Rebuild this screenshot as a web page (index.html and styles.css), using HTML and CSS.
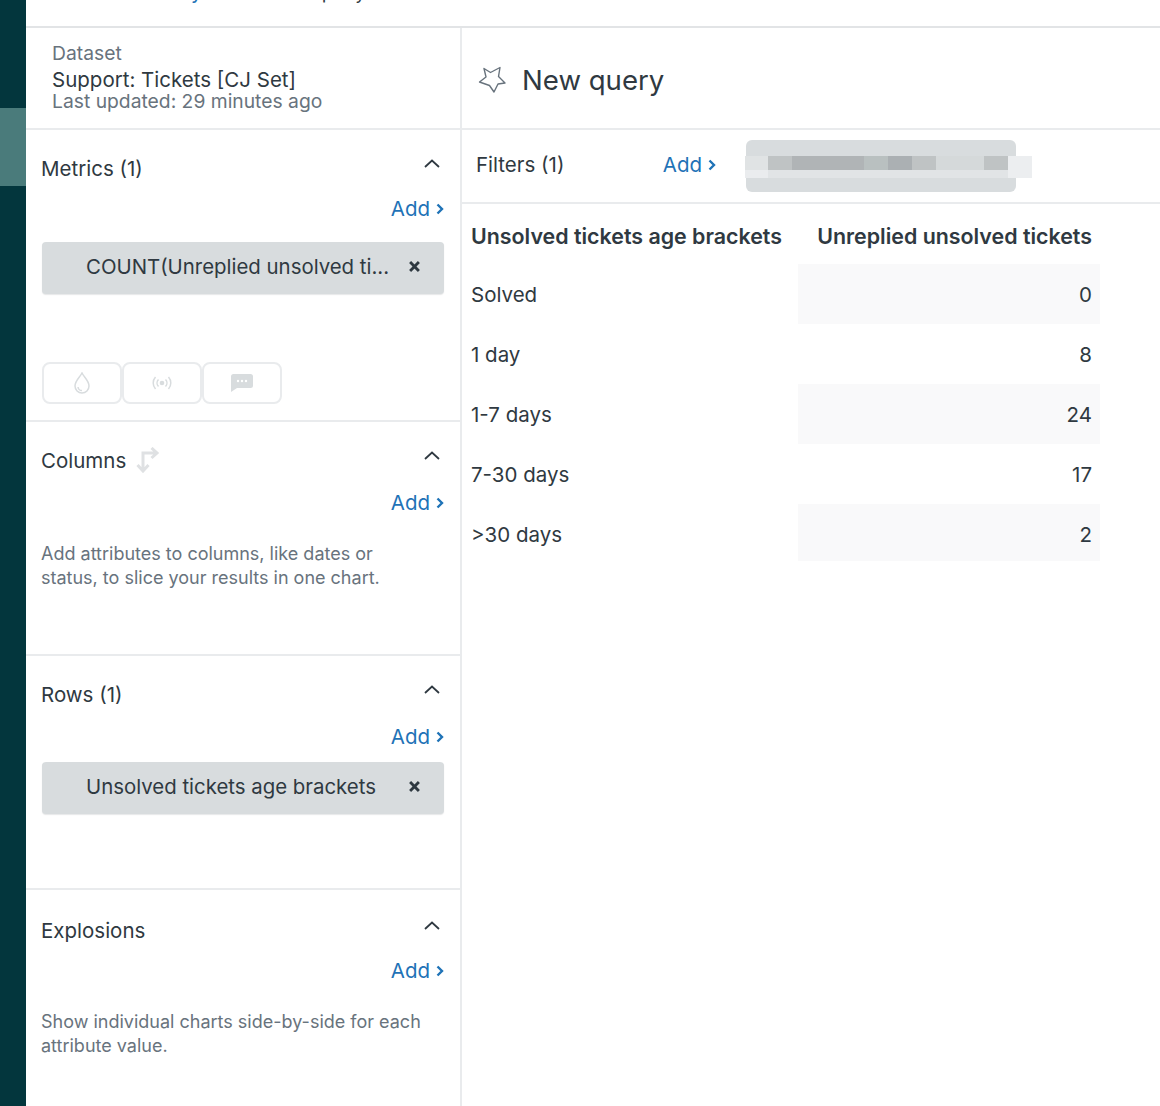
FILE: index.html
```html
<!DOCTYPE html>
<html lang="en">
<head>
<meta charset="utf-8">
<title>New query</title>
<link rel="stylesheet" href="styles.css">
</head>
<body>
<div class="app">
  <nav class="rail"><div class="rail-active"></div></nav>
  <div class="workspace">
    <header class="topbar"><span class="crumb-link">Library</span><span class="crumb">New query</span></header>
    <div class="panels">
      <aside class="left">
        <div class="dataset">
          <div class="muted">Dataset</div>
          <div class="dataset-name">Support: Tickets [CJ Set]</div>
          <div class="muted">Last updated: 29 minutes ago</div>
        </div>
        <section class="sec sec-metrics">
          <div class="sec-head"><span>Metrics (1)</span><svg class="chev" viewBox="0 0 16 10"><path d="M1 8l7-6.500L15 8"/></svg></div>
          <a class="add">Add<svg class="add-chev" viewBox="0 0 8 12"><path d="M1.500 1.500L6 6l-4.500 4.500"/></svg></a>
          <div class="chip"><span class="chip-text">COUNT(Unreplied unsolved ti...</span><svg class="chip-x" viewBox="0 0 10 10"><path d="M1 1l8 8M9 1l-8 8"/></svg></div>
          <div class="tools">
            <div class="tool"><svg viewBox="0 0 16 22" width="16" height="22"><path class="ico-line" d="M8 1C6.200 5 1 8.500 1 14a7 7 0 0 0 14 0C15 8.500 9.800 5 8 1z"/><path class="ico-line" d="M4 15a4 4 0 0 0 4 3.500"/></svg></div>
            <div class="tool"><svg viewBox="0 0 22 14" width="22" height="14"><circle class="ico-fill" cx="11" cy="7" r="2.300"/><path class="ico-line" d="M7.500 3.500a5 5 0 0 0 0 7M14.500 3.500a5 5 0 0 1 0 7M4.500 1a9 9 0 0 0 0 12M17.500 1a9 9 0 0 1 0 12"/></svg></div>
            <div class="tool"><svg viewBox="0 0 22 18" width="22" height="18"><path class="ico-fill" d="M2.500 0h17A2.500 2.500 0 0 1 22 2.500v9a2.500 2.500 0 0 1-2.500 2.500H6l-6 4V2.500A2.500 2.500 0 0 1 2.500 0z"/><circle class="ico-dot" cx="7" cy="7" r="1.200"/><circle class="ico-dot" cx="11" cy="7" r="1.200"/><circle class="ico-dot" cx="15" cy="7" r="1.200"/></svg></div>
          </div>
        </section>
        <section class="sec">
          <div class="sec-head"><span class="sec-title">Columns<svg class="swap" viewBox="0 0 26 26"><path d="M9 23V6h14M17.500 1l5.500 5-5.500 5M3.500 18l5.500 6 5.500-6"/></svg></span><svg class="chev" viewBox="0 0 16 10"><path d="M1 8l7-6.500L15 8"/></svg></div>
          <a class="add">Add<svg class="add-chev" viewBox="0 0 8 12"><path d="M1.500 1.500L6 6l-4.500 4.500"/></svg></a>
          <p class="hint">Add attributes to columns, like dates or status, to slice your results in one chart.</p>
        </section>
        <section class="sec">
          <div class="sec-head"><span>Rows (1)</span><svg class="chev" viewBox="0 0 16 10"><path d="M1 8l7-6.500L15 8"/></svg></div>
          <a class="add">Add<svg class="add-chev" viewBox="0 0 8 12"><path d="M1.500 1.500L6 6l-4.500 4.500"/></svg></a>
          <div class="chip chip-rows"><span class="chip-text">Unsolved tickets age brackets</span><svg class="chip-x" viewBox="0 0 10 10"><path d="M1 1l8 8M9 1l-8 8"/></svg></div>
        </section>
        <section class="sec sec-last">
          <div class="sec-head"><span>Explosions</span><svg class="chev" viewBox="0 0 16 10"><path d="M1 8l7-6.500L15 8"/></svg></div>
          <a class="add">Add<svg class="add-chev" viewBox="0 0 8 12"><path d="M1.500 1.500L6 6l-4.500 4.500"/></svg></a>
          <p class="hint">Show individual charts side-by-side for each attribute value.</p>
        </section>
      </aside>
      <main class="main">
        <div class="title-row">
          <svg class="star" viewBox="0 0 36 36"><path d="M10 6.500l6.500 4L26 5.500l-1.500 9L31 21l-7 1-4 8-4.500-6.500L5.500 20l6.500-5z"/></svg>
          <h1>New query</h1>
        </div>
        <div class="filter-row">
          <span class="filter-label">Filters (1)</span>
          <a class="add add-inline">Add<svg class="add-chev" viewBox="0 0 8 12"><path d="M1.500 1.500L6 6l-4.500 4.500"/></svg></a>
          <div class="filter-chip">
            <div class="mosaic" aria-hidden="true">
              <div class="m-row m-top"><i class="c0"></i><i class="c1"></i><i class="c2"></i><i class="c2"></i><i class="c2"></i><i class="c3"></i><i class="c4"></i><i class="c1"></i><i class="c5"></i><i class="c5"></i><i class="c1"></i><i class="c6"></i></div>
              <div class="m-row m-bottom"><i class="c7"></i><i class="c8"></i><i class="c8"></i><i class="c8"></i><i class="c8"></i><i class="c8"></i><i class="c8"></i><i class="c8"></i><i class="c8"></i><i class="c8"></i><i class="c8"></i><i class="c6"></i></div>
            </div>
          </div>
        </div>
        <div class="table">
          <div class="th">Unsolved tickets age brackets</div><div class="th th-num">Unreplied unsolved tickets</div>
          <div class="td">Solved</div><div class="td td-num shade">0</div>
          <div class="td">1 day</div><div class="td td-num">8</div>
          <div class="td">1-7 days</div><div class="td td-num shade">24</div>
          <div class="td">7-30 days</div><div class="td td-num">17</div>
          <div class="td td-last">&gt;30 days</div><div class="td td-num td-last shade">2</div>
        </div>
      </main>
    </div>
  </div>
</div>
</body>
</html>
```
FILE: styles.css
```css
* { box-sizing: border-box; }
html, body { margin: 0; height: 100%; overflow: hidden; }
body { font-family: Inter, "Liberation Sans", sans-serif; color: #2f3941; background: #fff; font-size: 20.500px; }
.app { display: flex; height: 1106px; }
.rail { width: 26px; flex: none; background: #03363d; padding-top: 108px; }
.rail-active { height: 78px; background: #4a7b7b; }
.workspace { flex: 1; min-width: 0; display: flex; flex-direction: column; }
.topbar { height: 28px; flex: none; border-bottom: 2px solid #e2e4e6; display: flex; gap: 68px; padding-left: 110px; overflow: hidden; line-height: 24px; font-size: 20px; }
.topbar span { margin-top: -20px; white-space: nowrap; }
.crumb { font-size: 18.500px; }
.crumb-link { color: #1f73b7; }
.panels { flex: 1; display: flex; min-height: 0; }
.left { width: 436px; flex: none; border-right: 2px solid #e9ebed; display: flex; flex-direction: column; }
.dataset { height: 102px; padding: 13px 26px 0; border-bottom: 2px solid #e9ebed; line-height: 24px; }
.dataset .muted:last-child { line-height: 18px; }
.muted { color: #68737d; font-size: 19.300px; }
.dataset-name { color: #2f3941; line-height: 24px; margin-top: 3px; }
.sec { height: 234px; padding: 25px 16px 0 15px; border-bottom: 2px solid #e9ebed; }
.sec-metrics { height: 292px; }
.sec-last { flex: 1; border-bottom: 0; padding-top: 27px; }
.sec-head { display: flex; justify-content: space-between; align-items: flex-start; height: 28px; line-height: 28px; }
.sec-title { display: flex; align-items: center; }
.chev { width: 16px; height: 10px; margin: 4px 4px 0 0; fill: none; stroke: #2f3941; stroke-width: 1.800; }
.swap { width: 26px; height: 26px; margin: -2px 0 0 8px; fill: none; stroke: #dfe1e3; stroke-width: 3; }
.add { display: flex; align-items: center; justify-content: flex-end; gap: 6px; color: #1f73b7; height: 28px; line-height: 28px; margin-top: 14px; }
.sec-metrics .add, .sec-last .add { margin-top: 12px; }
.add-chev { width: 8px; height: 12px; fill: none; stroke: #1f73b7; stroke-width: 2.400; }
.chip { height: 52px; margin: 19px 0 0 1px; background: #d8dcde; border-radius: 4px; display: flex; align-items: center; justify-content: space-between; padding: 0 24px 3px 44px; box-shadow: 0 1px 1px rgba(47,57,65,.12); }
.chip-rows { margin-top: 11px; }
.chip-text { white-space: nowrap; font-size: 20.400px; }
.chip-x { width: 11px; height: 11px; fill: none; stroke: #2f3941; stroke-width: 2.600; }
.tools { display: flex; margin: 68px 0 0 1px; }
.tool { width: 80px; height: 42px; border: 2px solid #e9ebed; border-radius: 8px; display: flex; align-items: center; justify-content: center; }
.ico-line { fill: none; stroke: #d8dcde; stroke-width: 1.500; }
.ico-fill { fill: #d8dcde; }
.ico-dot { fill: #fff; }
.hint { margin: 25px 0 0; max-width: 380px; font-size: 18px; line-height: 24px; color: #68737d; }
.main { flex: 1; min-width: 0; }
.title-row { height: 102px; display: flex; align-items: center; gap: 12px; padding: 4px 0 0 12px; border-bottom: 2px solid #e9ebed; }
.title-row h1 { margin: 0; font-size: 27.600px; font-weight: 400; line-height: 40px; color: #2f3941; }
.star { width: 36px; height: 36px; flex: none; margin-top: 0; fill: none; stroke: #68737d; stroke-width: 1.400; stroke-linejoin: round; }
.filter-row { height: 74px; display: flex; align-items: center; padding-left: 14px; border-bottom: 2px solid #e9ebed; }
.filter-label { width: 186px; flex: none; margin-top: -4px; }
.add-inline { width: 54px; flex: none; margin: -2px 30px 0 0; }
.filter-chip { position: relative; width: 270px; height: 52px; background: #d8dcde; border-radius: 6px; }
.mosaic { position: absolute; left: -1px; top: 16px; width: 287px; }
.m-row { display: flex; }
.m-row i { flex: none; width: 24px; }
.m-row i:first-child { width: 23px; }
.m-top { height: 14px; }
.m-bottom { height: 8px; }
.c0 { background: #e0e3e4; }
.c1 { background: #bfc3c4; }
.c2 { background: #b0b4b6; }
.c3 { background: #b9c0c0; }
.c4 { background: #abb0b3; }
.c5 { background: #d5d9da; }
.c6 { background: #eceef0; }
.c7 { background: #eaecee; }
.c8 { background: #e1e4e6; }
.table { display: grid; grid-template-columns: 327px 302px; grid-auto-rows: 60px; margin-left: 9px; }
.th { height: 60px; display: flex; align-items: center; padding-top: 3px; font-size: 21.400px; font-weight: 600; white-space: nowrap; }
.th-num { justify-content: flex-end; padding-right: 8px; }
.td { display: flex; align-items: center; }
.td-num { justify-content: flex-end; padding-right: 8px; }
.shade { background: #f9f9fa; }
.td-last { height: 57px; padding-top: 4px; }
```
